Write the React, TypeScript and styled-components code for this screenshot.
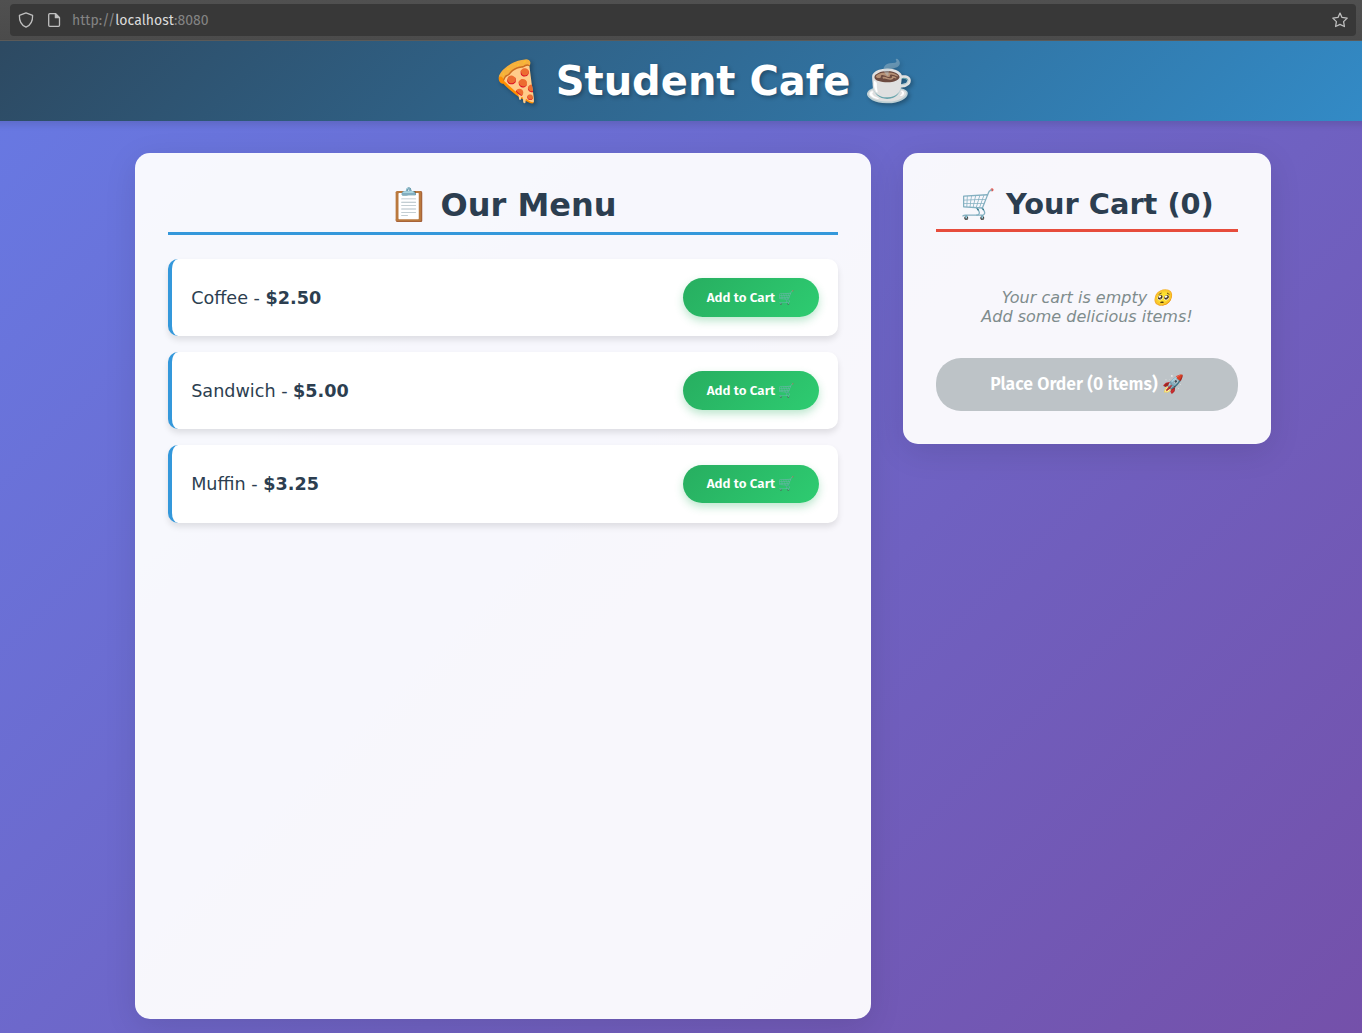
import React from "react";
import styled, { createGlobalStyle } from "styled-components";

const GlobalStyle = createGlobalStyle`
  * { box-sizing: border-box; margin: 0; padding: 0; }
  body { margin: 0; font-family: "DejaVu Sans", Verdana, sans-serif; overflow: hidden; }
`;

const Window = styled.div`
  display: flex;
  flex-direction: column;
  width: 100vw;
  height: 100vh;
  overflow: hidden;
`;

const Toolbar = styled.div`
  flex: none;
  height: 41px;
  padding: 4px 6px 4px 10px;
  background: linear-gradient(#505050, #4b4b4b);
  border-bottom: 1px solid #5c5b59;
`;

const AddressField = styled.div`
  display: flex;
  align-items: center;
  height: 32px;
  padding: 0 8px;
  border-radius: 4px;
  background: #383838;
  color: #bfbfbf;
`;

const ToolbarIcon = styled.svg`
  flex: none;
  width: 16px;
  height: 16px;
  margin-right: 12px;
  fill: none;
  stroke: currentColor;
  stroke-width: 1.3;
  stroke-linejoin: round;
  stroke-linecap: round;

  &:last-child { margin: 0; }
`;

const Address = styled.div`
  flex: 1;
  margin-left: -2px;
  padding-top: 2px;
  font: 14px/18px "Fira Sans", "Noto Sans", sans-serif;
  letter-spacing: 0.05px;
  color: #848484;
  strong { font-weight: 400; color: #dcdcdc; letter-spacing: 0.05px; }
`;

const Page = styled.div`
  flex: none;
  width: 1920px;
  height: 1010px;
  margin-left: -257px;
  background: linear-gradient(135deg, #667eea 0%, #764ba2 100%);
`;

const Header = styled.header`
  display: flex;
  justify-content: center;
  height: 80px;
  padding: 16px;
  background: linear-gradient(135deg, #2c3e50, #3498db);
  box-shadow: 0 4px 6px rgba(0, 0, 0, 0.1);
`;

const Title = styled.h1`
  font-size: 40px;
  line-height: 48px;
  color: white;
  white-space: nowrap;
  text-shadow: 2px 2px 4px rgba(0, 0, 0, 0.3);
`;

const Layout = styled.main`
  display: grid;
  grid-template-columns: 2fr 1fr;
  align-items: start;
  gap: 32px;
  width: 1200px;
  margin: 0 auto;
  padding: 32px;
`;

const Panel = styled.section<{ $height: number }>`
  height: ${(p) => p.$height}px;
  padding: 32px;
  border: 1px solid rgba(255, 255, 255, 0.2);
  border-radius: 15px;
  background: rgba(255, 255, 255, 0.95);
  box-shadow: 0 8px 32px rgba(0, 0, 0, 0.1);
`;

const PanelTitle = styled.h2<{ $size: number; $height: number; $line: number; $accent: string }>`
  height: ${(p) => p.$height}px;
  margin-bottom: 24px;
  border-bottom: 3px solid ${(p) => p.$accent};
  font-size: ${(p) => p.$size}px;
  line-height: ${(p) => p.$line}px;
  text-align: center;
  white-space: nowrap;
  color: #2c3e50;
`;

const Menu = styled.ul`
  display: flex;
  flex-direction: column;
  gap: 16px;
  list-style: none;
`;

const MenuItem = styled.li`
  display: flex;
  align-items: center;
  justify-content: space-between;
  height: 77.2px;
  padding: 0 19.2px;
  border-left: 4px solid #3498db;
  border-radius: 10px;
  background: white;
  box-shadow: 0 4px 6px rgba(0, 0, 0, 0.1);
  font-size: 17.6px;
  color: #2c3e50;
`;

const Button = styled.button`
  display: flex;
  align-items: center;
  justify-content: center;
  border: 0;
  border-radius: 25px;
  color: white;
  font-family: "Fira Sans", "Noto Sans", sans-serif;
  font-weight: 600;
  white-space: pre;
`;

const AddButton = styled(Button)`
  width: 136px;
  height: 38.8px;
  background: linear-gradient(135deg, #27ae60, #2ecc71);
  box-shadow: 0 4px 8px rgba(39, 174, 96, 0.3);
  font-size: 13.33px;
  letter-spacing: 0.03px;
`;

const OrderButton = styled(Button)`
  width: 100%;
  height: 53px;
  background: #bdc3c7;
  font-size: 17.6px;
  letter-spacing: 0;
`;

const EmptyCart = styled.p`
  padding: 32px 0;
  font-size: 16px;
  line-height: 19px;
  font-style: italic;
  text-align: center;
  color: #7f8c8d;
`;

const Emoji = styled.span<{ $faded?: boolean }>`
  font-family: "Noto Color Emoji", sans-serif;
  letter-spacing: 0;
  opacity: ${(p) => (p.$faded ? 0.7 : 1)};
`;

const ButtonEmoji = styled(Emoji)`
  padding-bottom: 2px;
`;

const items = [
  { name: "Coffee", price: "2.50" },
  { name: "Sandwich", price: "5.00" },
  { name: "Muffin", price: "3.25" },
];

export default function App() {
  return (
    <Window>
      <GlobalStyle />
      <Toolbar>
        <AddressField>
          <ToolbarIcon viewBox="0 0 16 16">
            <path d="M8 .8 14.6 3.4C14.8 8.7 12.8 13 8 15.2 3.2 13 1.2 8.7 1.4 3.4Z" />
          </ToolbarIcon>
          <ToolbarIcon viewBox="0 0 16 16">
            <path d="M3.8 1.7h5.8l3.9 3.9v7.6q0 1.1-1.1 1.1H3.8q-1.1 0-1.1-1.1V2.8q0-1.1 1.1-1.1Z" />
            <path d="M9.4 1.8v3.9h4Z" fill="currentColor" />
          </ToolbarIcon>
          <Address>http://<strong>localhost</strong>:8080</Address>
          <ToolbarIcon viewBox="0 0 16 16">
            <path d="M8 1.1 10 5.4 15.2 6.1 11.6 9.6 12.4 14.5 8 12.4 3.6 14.5 4.4 9.6.8 6.1 6 5.4Z" />
          </ToolbarIcon>
        </AddressField>
      </Toolbar>
      <Page>
        <Header>
          <Title><Emoji>🍕</Emoji> Student Cafe <Emoji>☕</Emoji></Title>
        </Header>
        <Layout>
          <Panel $height={866}>
            <PanelTitle $size={32} $height={49} $line={38} $accent="#3498db">
              <Emoji>📋</Emoji> Our Menu
            </PanelTitle>
            <Menu>
              {items.map((item) => (
                <MenuItem key={item.name}>
                  <span>{item.name} - <strong>${item.price}</strong></span>
                  <AddButton>Add to Cart <Emoji $faded>🛒</Emoji></AddButton>
                </MenuItem>
              ))}
            </Menu>
          </Panel>
          <Panel $height={291}>
            <PanelTitle $size={28.8} $height={46} $line={37} $accent="#e74c3c">
              <Emoji>🛒</Emoji> Your Cart (0)
            </PanelTitle>
            <EmptyCart>
              Your cart is empty <Emoji>🥺</Emoji><br />Add some delicious items!
            </EmptyCart>
            <OrderButton>Place Order (0 items) <ButtonEmoji>🚀</ButtonEmoji></OrderButton>
          </Panel>
        </Layout>
      </Page>
    </Window>
  );
}
